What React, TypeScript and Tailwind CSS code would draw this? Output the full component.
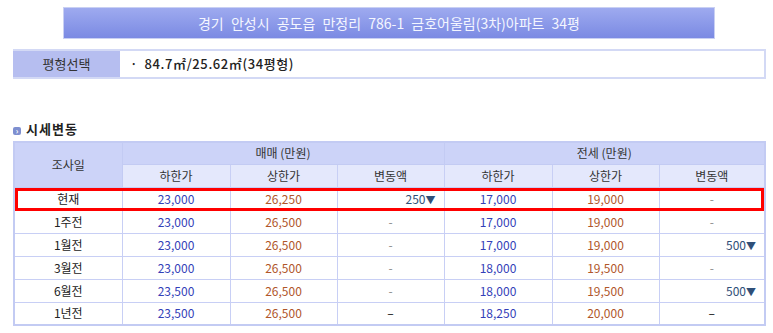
const rows = [
  { d: "현재", a: "23,000", b: "26,250", c: "250", e: "17,000", f: "19,000", g: "-" },
  { d: "1주전", a: "23,000", b: "26,500", c: "-", e: "17,000", f: "19,000", g: "-" },
  { d: "1월전", a: "23,000", b: "26,500", c: "-", e: "17,000", f: "19,000", g: "500" },
  { d: "3월전", a: "23,000", b: "26,500", c: "-", e: "18,000", f: "19,500", g: "-" },
  { d: "6월전", a: "23,500", b: "26,500", c: "-", e: "18,000", f: "19,500", g: "500" },
  { d: "1년전", a: "23,500", b: "26,500", c: "–", e: "18,250", f: "20,000", g: "–" },
];

const Change = ({ v, last }: { v: string; last: boolean }) =>
  /\d/.test(v) ? (
    <td className="border border-[#c8cff5] pr-[8px] text-right text-[#2f4f78]">
      {v}
      <span className="text-[10px]">▼</span>
    </td>
  ) : (
    <td className={`border border-[#c8cff5] text-center ${last ? "text-black" : "text-[#8a8a8a]"}`}>{v}</td>
  );

const App = () => {
  return (
    <div
      className="w-[773px] h-[333px] bg-white text-[12px] text-[#333]"
      style={{ fontFamily: '"Noto Sans CJK KR", "Noto Sans", sans-serif' }}
    >
      <div className="pt-[7px] pl-[63px]">
        <div className="w-[652px] h-[32px] border border-[#c9d0f3] bg-gradient-to-b from-[#9eaaef] to-[#7b8ae3] flex items-center justify-center text-[14px] text-[#f4f6ff] [word-spacing:4px]">
          경기 안성시 공도읍 만정리 786-1 금호어울림(3차)아파트 34평
        </div>
      </div>

      <div className="mt-[10px] ml-[13px] w-[753px] h-[30px] flex border-y-2 border-r-2 border-[#d3d9f5]">
        <div className="w-[107px] bg-[#b6bef0] flex items-center justify-center text-[13px] text-[#333]">평형선택</div>
        <div className="flex-1 flex items-center pl-[10px] text-[13px] font-medium text-[#222] tracking-[0.6px] [word-spacing:3px]">
          · 84.7㎡/25.62㎡(34평형)
        </div>
      </div>

      <div className="mt-[42px] ml-[13px] flex items-center gap-[5px] h-[16px]">
        <span className="w-[8px] h-[8px] mt-[3px] rounded-[2px] bg-[#7e8fd0] flex items-center justify-center text-white text-[8px] font-bold leading-none">›</span>
        <span className="font-bold text-[13px] text-[#222] tracking-[1px]">시세변동</span>
      </div>

      <div className="relative mt-[4px] ml-[13px] w-[753px]">
        <table className="w-full border-collapse border-2 border-[#c3cbf3] table-fixed text-center">
          <colgroup>
            <col className="w-[108px]" />
            <col className="w-[108px]" />
            <col className="w-[107px]" />
            <col className="w-[107px]" />
            <col className="w-[108px]" />
            <col className="w-[107px]" />
            <col />
          </colgroup>
          <thead>
            <tr className="h-[22px] bg-[#ccd3f8]">
              <th rowSpan={2} className="font-normal border border-[#c3cbf3]">조사일</th>
              <th colSpan={3} className="font-normal border border-[#c3cbf3]">매매 (만원)</th>
              <th colSpan={3} className="font-normal border border-[#c3cbf3]">전세 (만원)</th>
            </tr>
            <tr className="h-[23px] bg-[#e4e8fc]">
              {["하한가", "상한가", "변동액", "하한가", "상한가", "변동액"].map((h, i) => (
                <th key={i} className="font-normal border border-[#c8cff5]">{h}</th>
              ))}
            </tr>
          </thead>
          <tbody>
            {rows.map((r, i) => (
              <tr key={i} className="h-[23px]">
                <td className="border border-[#c8cff5] text-[#222]">{r.d}</td>
                <td className="border border-[#c8cff5] text-[#3340b8]">{r.a}</td>
                <td className="border border-[#c8cff5] text-[#b0562a]">{r.b}</td>
                <Change v={r.c} last={i === rows.length - 1} />
                <td className="border border-[#c8cff5] text-[#3340b8]">{r.e}</td>
                <td className="border border-[#c8cff5] text-[#b0562a]">{r.f}</td>
                <Change v={r.g} last={i === rows.length - 1} />
              </tr>
            ))}
          </tbody>
        </table>
        <div className="absolute left-[2px] top-[47px] w-[749px] h-[23px] border-[3px] border-[#ff0000]" />
      </div>
    </div>
  );
};

export default App;
